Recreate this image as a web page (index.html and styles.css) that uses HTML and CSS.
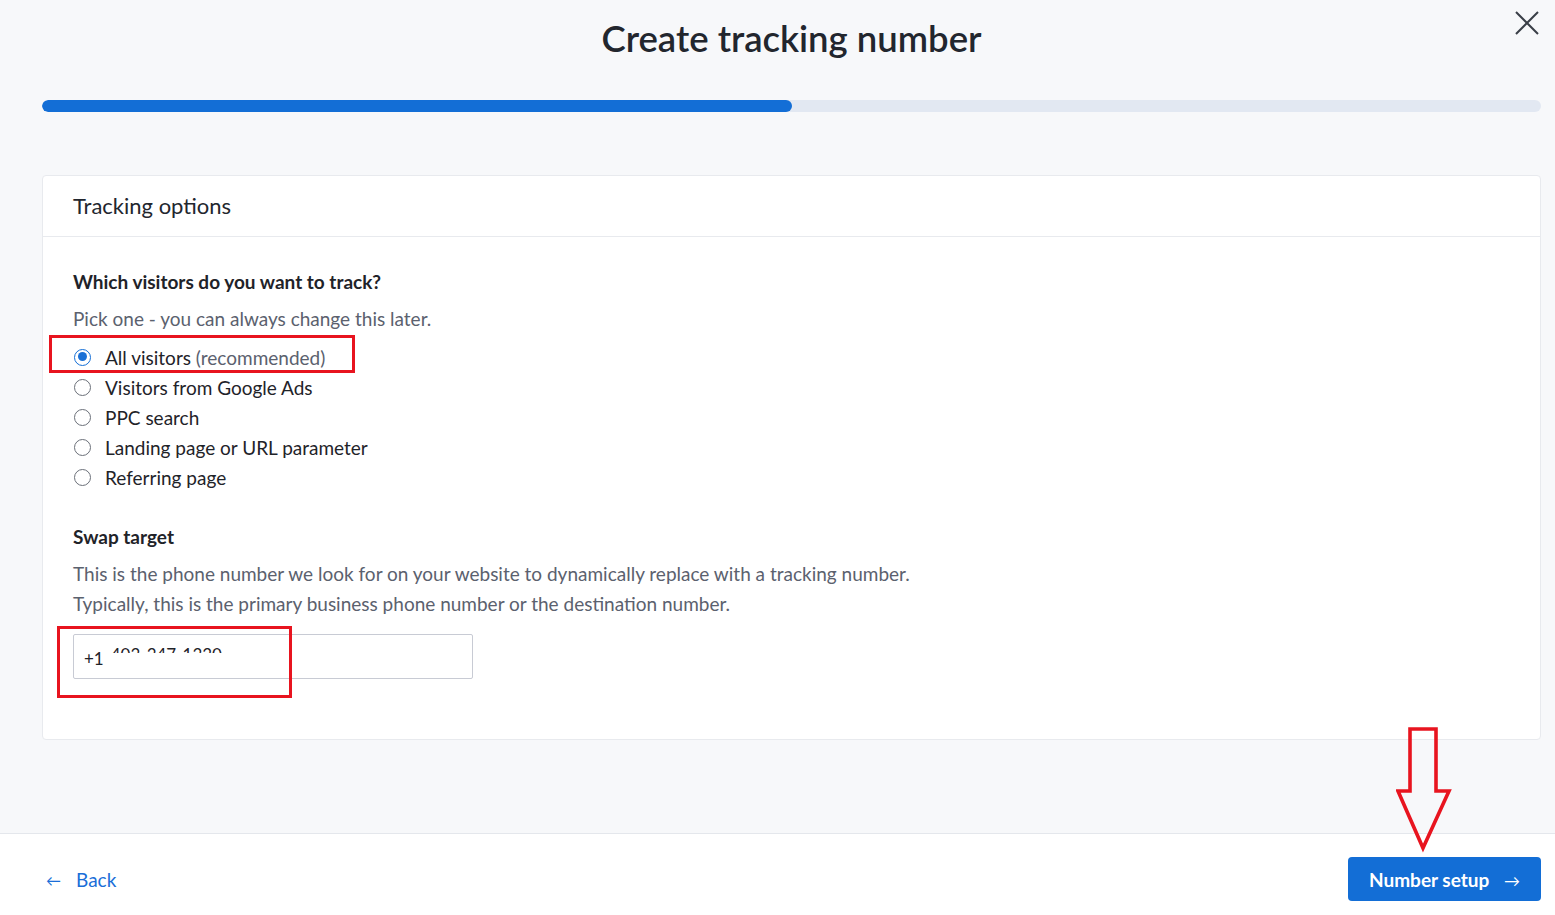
FILE: index.html
```html
<!DOCTYPE html>
<html lang="en">
<head>
<meta charset="utf-8">
<title>Create tracking number</title>
<link rel="stylesheet" href="styles.css">
</head>
<body>
<div class="page">
  <div class="main">
    <header class="top">
      <h1 class="title">Create tracking number</h1>
      <button class="close" aria-label="Close">
        <svg width="26" height="26" viewBox="0 0 26 26"><path d="M2 2 L24 24 M24 2 L2 24" stroke="#3a3f47" stroke-width="2" fill="none"/></svg>
      </button>
    </header>
    <div class="progress"><div class="progress-fill" style="width:50%"></div></div>

    <section class="card">
      <div class="card-head">Tracking options</div>
      <div class="card-body">
        <h2 class="q">Which visitors do you want to track?</h2>
        <p class="hint">Pick one - you can always change this later.</p>
        <div class="radios">
          <label class="radio"><span class="dot checked"></span><span>All visitors <span class="muted">(recommended)</span></span></label>
          <label class="radio"><span class="dot"></span><span>Visitors from Google Ads</span></label>
          <label class="radio"><span class="dot"></span><span>PPC search</span></label>
          <label class="radio"><span class="dot"></span><span>Landing page or URL parameter</span></label>
          <label class="radio"><span class="dot"></span><span>Referring page</span></label>
          <div class="mark mark-radio"></div>
        </div>

        <h2 class="q q2">Swap target</h2>
        <p class="desc">This is the phone number we look for on your website to dynamically replace with a tracking number.<br>Typically, this is the primary business phone number or the destination number.</p>
        <div class="field-wrap">
          <div class="field"><span class="cc">+1</span><span class="num"><span>403-347-1330</span></span></div>
          <div class="mark mark-field"></div>
        </div>
      </div>
    </section>
  </div>

  <footer class="foot">
    <a class="back" href="#"><span class="arr">&#8592;</span>Back</a>
    <button class="next">Number setup <span class="arr-r">&#8594;</span></button>
    <svg class="down-arrow" width="56" height="126" viewBox="0 0 56 126"><path d="M14 2 H40 V64 H53 L27 121 L2 64 H14 Z" fill="none" stroke="#e8141f" stroke-width="3.6" stroke-linejoin="miter"/></svg>
  </footer>
</div>
</body>
</html>
```

FILE: styles.css
```css
* { box-sizing: border-box; }
html, body { margin: 0; padding: 0; }
body {
  background: #f7f8fa;
  font-family: "Lato", "Liberation Sans", sans-serif;
  color: #1f2329;
}
.page {
  height: 100vh;
  display: flex;
  flex-direction: column;
  position: relative;
}
.main {
  flex: 1;
  padding: 0 14px 0 42px;
}
.top {
  position: relative;
  padding-top: 18px;
  text-align: center;
}
.title {
  margin: 0;
  font-size: 36.5px;
  line-height: 40px;
  font-weight: 600;
  color: #22262e;
}
.close {
  position: absolute;
  top: 10px;
  right: 1px;
  border: 0;
  background: none;
  padding: 0;
  cursor: pointer;
}
.progress {
  margin-top: 42px;
  height: 12px;
  background: #e2e8f2;
  border-radius: 6px;
  overflow: hidden;
}
.progress-fill {
  height: 100%;
  background: #136ed6;
  border-radius: 6px;
}
.card {
  margin-top: 63px;
  background: #fff;
  border: 1px solid #e8eaee;
  border-radius: 4px;
}
.card-head {
  height: 61px;
  border-bottom: 1px solid #e8eaee;
  padding: 0 30px;
  font-size: 22px;
  line-height: 60px;
  color: #22262e;
}
.card-body {
  padding: 33px 30px 60px;
}
.q {
  margin: 0;
  font-size: 19px;
  line-height: 24px;
  font-weight: 700;
  color: #1f2329;
}
.hint {
  margin: 13px 0 0;
  font-size: 19px;
  line-height: 24px;
  color: #5b616e;
}
.radios {
  position: relative;
  margin-top: 11px;
}
.radio {
  display: flex;
  align-items: center;
  height: 30px;
  font-size: 19px;
  color: #1f2329;
}
.muted { color: #5b616e; }
.dot {
  width: 17px;
  height: 17px;
  border: 1.5px solid #6b7079;
  border-radius: 50%;
  margin: 0 14px 0 1px;
  flex: none;
  position: relative;
}
.dot.checked {
  border-color: #136ed6;
}
.dot.checked::after {
  content: "";
  position: absolute;
  left: 2.5px; top: 2.5px;
  width: 9px; height: 9px;
  border-radius: 50%;
  background: #1a70d6;
}
.mark {
  position: absolute;
  border: 3px solid #e8141f;
  pointer-events: none;
}
.mark-radio {
  left: -24px;
  top: -7px;
  width: 306px;
  height: 38px;
}
.q2 { margin-top: 33px; }
.desc {
  margin: 10px 0 0;
  font-size: 19px;
  line-height: 30px;
  color: #5b616e;
}
.field-wrap {
  position: relative;
  margin-top: 15px;
  width: 400px;
}
.field {
  height: 45px;
  border: 1px solid #c8cbd4;
  border-radius: 2px;
  background: #fff;
  display: flex;
  align-items: center;
  padding: 0 10px;
  font-size: 17px;
  color: #1f2329;
}
.cc { margin-top: 4px; }
.num {
  align-self: flex-start;
  display: inline-block;
  height: 8px;
  overflow: hidden;
  margin-left: 7px;
  margin-top: 10px;
  font-size: 17px;
  line-height: 20px;
}
.num span { display: block; }
.mark-field {
  left: -16px;
  top: -8px;
  width: 235px;
  height: 72px;
}
.foot {
  position: relative;
  height: 82px;
  background: #fff;
  border-top: 1px solid #e4e7ec;
  display: flex;
  justify-content: space-between;
  align-items: flex-start;
  padding: 23px 14px 0 46px;
}
.back {
  margin-top: 11px;
  font-size: 19px;
  color: #1a6ed8;
  text-decoration: none;
  display: flex;
  align-items: center;
}
.back .arr { font-size: 15px; margin-right: 15px; }
.next {
  height: 44px;
  width: 193px;
  border: 0;
  border-radius: 4px;
  background: #136ed6;
  color: #fff;
  font-family: inherit;
  font-size: 19px;
  font-weight: 700;
  padding: 0;
}
.arr-r { font-weight: 400; margin-left: 10px; font-size: 16px; }
.down-arrow {
  position: absolute;
  right: 103px;
  top: -107px;
}
```
